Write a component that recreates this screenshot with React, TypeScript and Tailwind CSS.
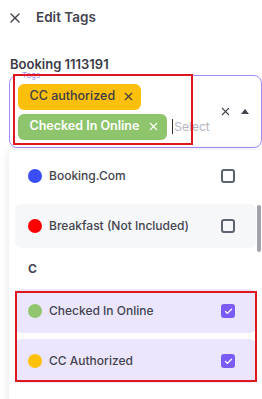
import { X, Check } from 'lucide-react';

type Tag = { name: string; dot: string; checked: boolean };

const groupB: Tag[] = [
  { name: 'Booking.Com', dot: 'bg-[#3a4ef7]', checked: false },
  { name: 'Breakfast (Not Included)', dot: 'bg-[#ff0000]', checked: false },
];

const groupC: Tag[] = [
  { name: 'Checked In Online', dot: 'bg-[#91c66e]', checked: true },
  { name: 'CC Authorized', dot: 'bg-[#ffc107]', checked: true },
];

function Row({ tag, hover }: { tag: Tag; hover?: boolean }) {
  const bg = tag.checked ? 'bg-[#ebe6fd]' : hover ? 'bg-[#f6f7f9]' : 'bg-white';
  return (
    <div className={`flex h-[44px] items-center rounded-[6px] pl-[13px] pr-[21px] ${bg}`}>
      <span className={`h-[14px] w-[14px] shrink-0 rounded-full ${tag.dot}`} />
      <span className="ml-[7px] flex-1 text-[12px] font-medium text-[#44444f]">{tag.name}</span>
      {tag.checked ? (
        <span className="flex h-[14px] w-[14px] items-center justify-center rounded-[3px] bg-[#7c5cf6]">
          <Check className="h-[9px] w-[9px] text-white" strokeWidth={3.5} />
        </span>
      ) : (
        <span className="h-[14px] w-[14px] rounded-[3px] border-2 border-[#5d6370]" />
      )}
    </div>
  );
}

export default function App() {
  return (
    <div className="relative h-[399px] w-[262px] overflow-hidden bg-white font-['Inter',sans-serif]">
      <div className="flex h-[35px] items-center pl-[7px]">
        <X className="h-[16px] w-[16px] text-[#44444f]" strokeWidth={2} />
        <span className="ml-[13px] text-[13.5px] font-semibold text-[#44444f]">Edit Tags</span>
      </div>

      <div className="mt-[21px] h-[16px] pl-[10px] text-[13px] font-semibold leading-[16px] text-[#3c3c48]">
        Booking 1113191
      </div>

      <div className="relative mt-[3px] ml-[9px] flex h-[73px] items-center rounded-[8px] border-[1.5px] border-[#a58cf9]">
        <span className="absolute -top-[5px] left-[11px] px-[1px] text-[8px] leading-[9px] text-[#a58cf9]">
          Tags
        </span>
        <div className="ml-[7.5px] flex w-[196px] flex-wrap items-center gap-[4px]">
          <span className="flex h-[26px] items-center gap-[7px] rounded-[6px] bg-[#fcbf0b] pl-[12px] pr-[6px] text-[12.5px] font-medium text-[#3c3c48]">
            CC authorized
            <X className="h-[13px] w-[13px]" strokeWidth={2} />
          </span>
          <span className="flex h-[26px] items-center gap-[8px] rounded-[6px] bg-[#8ec46c] pl-[12px] pr-[7px] text-[12.5px] font-semibold text-white">
            Checked In Online
            <X className="h-[13px] w-[13px]" strokeWidth={2} />
          </span>
          <span className="ml-[1px] flex items-center text-[12px] text-[#b4b4bd]">
            <span className="mr-[1px] h-[15px] w-px bg-[#333]" />
            Select
          </span>
        </div>
        <X className="ml-[5px] h-[13px] w-[13px] text-[#44444f]" strokeWidth={2} />
        <svg className="ml-[9px]" width="8" height="5" viewBox="0 0 8 5">
          <path d="M0 5 L4 0 L8 5 Z" fill="#44444f" />
        </svg>
      </div>

      <div className="relative mt-[2px] ml-[9px] h-[260px] bg-white px-[6px] pt-[4px] shadow-[0_0_10px_rgba(0,0,0,0.1)]">
        <div className="flex flex-col gap-[6px]">
          <Row tag={groupB[0]} />
          <Row tag={groupB[1]} hover />
        </div>
        <div className="flex h-[41px] items-center pl-[13px] text-[12px] font-bold text-[#44444f]">C</div>
        <div className="flex flex-col gap-[6px]">
          {groupC.map((t) => (
            <Row key={t.name} tag={t} />
          ))}
        </div>
        <div className="absolute right-[1px] top-[55px] h-[47px] w-[4px] rounded-full bg-[#a0a4aa]" />
      </div>

      <div className="pointer-events-none absolute left-[13px] top-[74px] h-[71px] w-[180px] border-2 border-[#e0161e]" />
      <div className="pointer-events-none absolute left-[15px] top-[291px] h-[91px] w-[242px] border-2 border-[#e0161e]" />
    </div>
  );
}
